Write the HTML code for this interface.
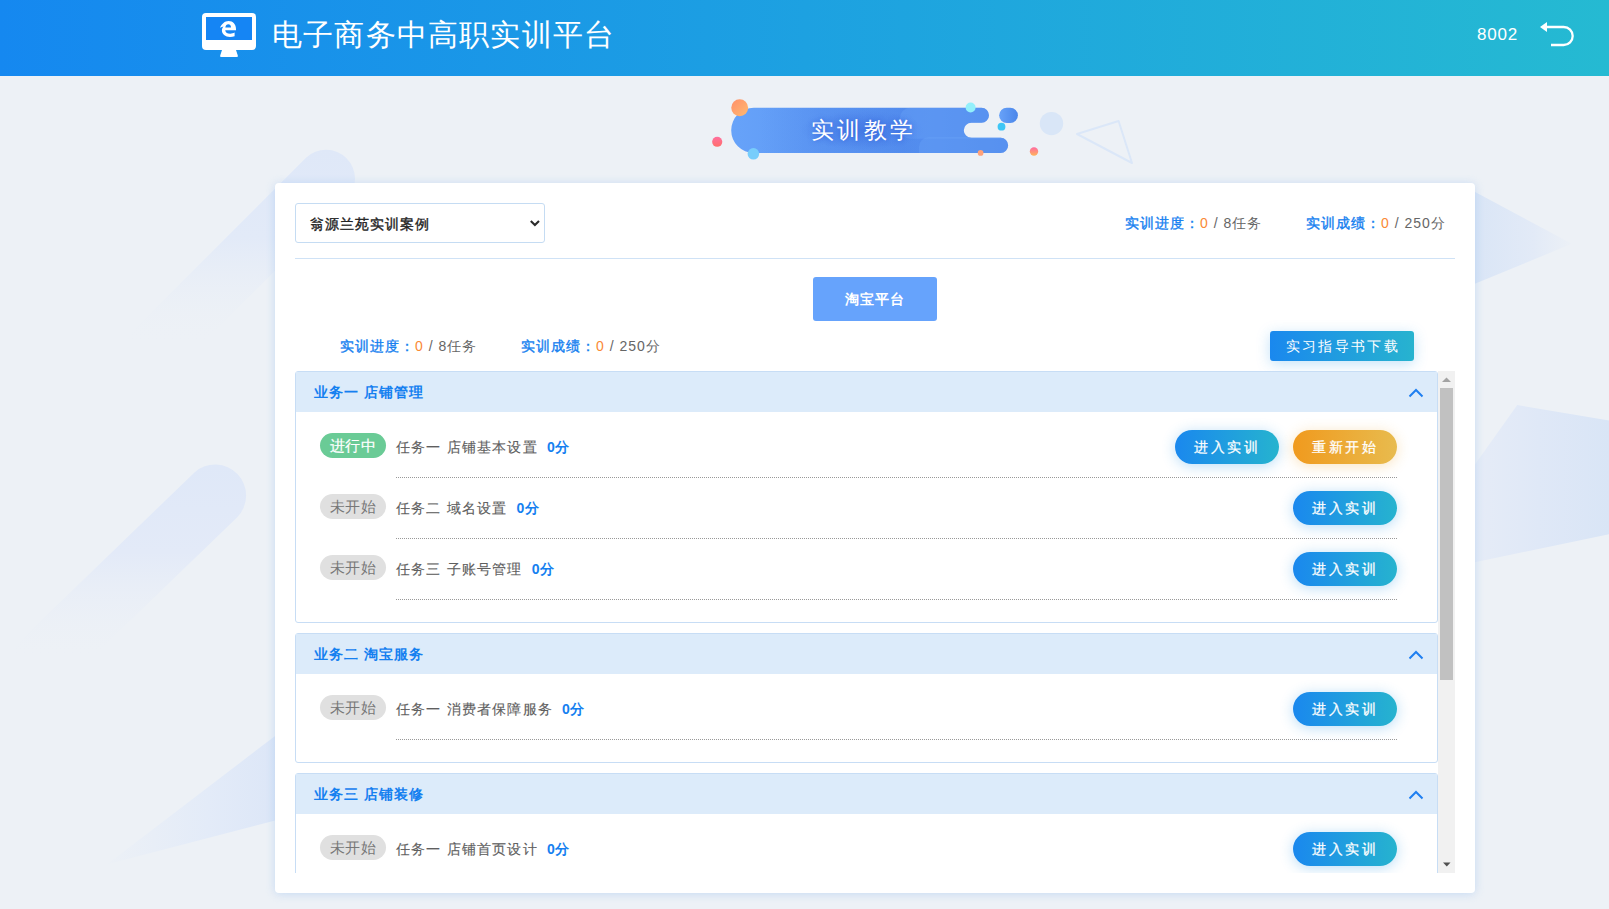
<!DOCTYPE html>
<html><head><meta charset="utf-8">
<style>
*{box-sizing:border-box;margin:0;padding:0}
html,body{width:1609px;height:909px;overflow:hidden}
body{background:#edf1f6;font-family:"Liberation Sans",sans-serif;position:relative;color:#666;letter-spacing:1px}
.abs{position:absolute}
#hdr{left:0;top:0;width:1609px;height:76px;background:linear-gradient(90deg,#1588f0 0%,#25bad2 100%)}
#title{left:272px;top:15px;font-size:30px;letter-spacing:1.2px;color:#fff;white-space:nowrap;line-height:40px}
#uid{left:1477px;top:23px;font-size:17px;letter-spacing:0.8px;color:#fff;line-height:24px}
.bg{position:absolute}
#card{left:275px;top:183px;width:1200px;height:710px;background:#fff;border-radius:4px;box-shadow:0 1px 10px rgba(150,190,240,.45)}
#sel{left:295px;top:203px;width:250px;height:40px;border:1px solid #c5dcf3;border-radius:3px;background:#fff}
#sel span{position:absolute;left:14px;top:10px;font-size:14px;font-weight:normal;-webkit-text-stroke:0.35px #222;color:#222;line-height:20px}
.stat{font-size:14px;line-height:20px;white-space:nowrap;color:#666}
.stat b{color:#1580f0;font-weight:normal;-webkit-text-stroke:0.35px #1580f0}
.stat i{font-style:normal;color:#fa8a35}
#div1{left:295px;top:258px;width:1160px;height:1px;background:#cfe2f6}
#tb{left:813px;top:277px;width:124px;height:44px;background:#66a3fc;border-radius:3px;color:#fff;font-weight:bold;font-size:14px;text-align:center;line-height:44px}
#guide{left:1270px;top:331px;width:144px;height:30px;border-radius:3px;background:linear-gradient(90deg,#1a88ee,#27b3cf);color:#fff;font-size:14px;text-align:center;line-height:30px;letter-spacing:2.35px;text-indent:1.5px;box-shadow:0 3px 14px rgba(40,150,230,.28)}
#scroll{left:295px;top:371px;width:1160px;height:502px;overflow:hidden}
.sec{position:absolute;left:0;width:1143px;border:1px solid #c7ddf5;border-radius:3px;background:#fff}
.sh{height:40px;background:#dcebfa;position:relative}
.sh span{position:absolute;left:18px;top:10px;font-size:14px;font-weight:bold;color:#1580f0;line-height:20px}
.sh svg{position:absolute;right:13.5px;top:16px}
.row{position:absolute;left:0;width:1141px;height:61px}
.badge{position:absolute;left:24px;width:66px;height:25px;border-radius:13px;font-size:15px;text-align:center;line-height:25px;letter-spacing:0.9px;text-indent:0.9px}
.g{background:#6acb96;color:#fff;-webkit-text-stroke:0.2px #fff}
.n{background:#e0e0e0;color:#777}
.tt{position:absolute;left:100px;font-size:14px;line-height:20px;color:#5f5f5f;white-space:nowrap;letter-spacing:1.2px;-webkit-text-stroke:0.15px #5f5f5f}
.tt b{color:#1580f0;-webkit-text-stroke:0;font-weight:600;margin-left:9px;letter-spacing:0.6px}
.dot{position:absolute;left:100px;width:1001px;height:0;border-top:1px dotted #999}
.btn{position:absolute;width:104px;height:34px;border-radius:17px;color:#fff;font-size:14px;text-align:center;line-height:34px;letter-spacing:2.4px;text-indent:0.5px;-webkit-text-stroke:0.25px #fff}
.bb{background:linear-gradient(90deg,#1a88ee,#26b3cf);box-shadow:0 2px 14px rgba(40,150,230,.32)}
.bo{background:linear-gradient(90deg,#f09a1e,#e8bb4e);box-shadow:0 2px 14px rgba(240,170,60,.32)}
#sb{left:1143px;top:0;width:17px;height:502px;background:#f1f1f1}
</style></head><body>
<div id="hdr" class="abs"></div>
<div id="title" class="abs">电子商务中高职实训平台</div>
<div id="uid" class="abs">8002</div>
<svg class="abs" style="left:200px;top:10px" width="60" height="50" viewBox="200 10 60 50">
<rect x="202" y="13" width="54" height="37" rx="4" fill="#fff"/>
<rect x="206" y="17" width="46" height="23" fill="#1585f4"/>
<path d="M221.5,57 L236.5,57 Q238.5,57 237.8,55.5 L236,50 L222,50 L220.2,55.5 Q219.5,57 221.5,57 Z" fill="#fff"/>
<g transform="translate(220,21)">
<path d="M0,6.8 C1.8,2.8 4.8,0 8.5,0 C13,0 16,3.5 16,8 L16,9.2 L5.2,9.2 C5.4,11.6 7.6,12.8 10.2,12.8 C11.8,12.8 13.3,12.3 14.6,11.6 L14.6,15.2 C13.2,15.8 11.6,16 10,16 C5.2,16 1.9,13.2 1.9,9.6 C1.9,8 2.6,6.6 3.6,5.6 C2.4,5.9 1.2,6.3 0,6.8 Z" fill="#fff"/>
<path d="M5.3,6.6 C5.5,4.3 6.8,3.2 8.3,3.2 C9.9,3.2 11,4.4 11,6.6 Z" fill="#1585f4"/>
</g></svg>
<svg class="abs" style="left:1536px;top:18px" width="42" height="32" viewBox="0 0 42 32">
<polygon points="4,9 11,4 11,14" fill="#fff"/>
<path d="M10,9 L27.7,9 A9,9 0 0 1 27.7,27 L15,27" fill="none" stroke="#fff" stroke-width="2.3"/>
</svg>
<svg class="abs" style="left:700px;top:90px" width="450" height="85" viewBox="0 0 450 85">
<defs>
<linearGradient id="bg1" x1="0" y1="0" x2="1" y2="0"><stop offset="0" stop-color="#6aa6fb"/><stop offset="0.5" stop-color="#5a95f2"/><stop offset="1" stop-color="#4a84ea"/></linearGradient>
<linearGradient id="bg2" x1="0" y1="0" x2="1" y2="0"><stop offset="0" stop-color="#68a2f8"/><stop offset="1" stop-color="#4a86ea"/></linearGradient>
<linearGradient id="og" x1="0" y1="0" x2="1" y2="1"><stop offset="0" stop-color="#ff8f6a"/><stop offset="1" stop-color="#ffba70"/></linearGradient>
<linearGradient id="pg" x1="0" y1="0" x2="0" y2="1"><stop offset="0" stop-color="#ff6aa0"/><stop offset="1" stop-color="#ffb45a"/></linearGradient>
<linearGradient id="rg" x1="0" y1="0" x2="0" y2="1"><stop offset="0" stop-color="#ff6f9f"/><stop offset="1" stop-color="#ff6f6a"/></linearGradient>
<linearGradient id="dk" x1="0" y1="0" x2="1" y2="0"><stop offset="0" stop-color="#3f72e0" stop-opacity="0"/><stop offset="0.35" stop-color="#3f72e0" stop-opacity="0.16"/><stop offset="0.85" stop-color="#3f72e0" stop-opacity="0.16"/><stop offset="1" stop-color="#3f72e0" stop-opacity="0"/></linearGradient>
<radialGradient id="tg" cx="0.5" cy="0.5" r="0.5"><stop offset="0" stop-color="#3d70e0" stop-opacity="0.55"/><stop offset="1" stop-color="#3d70e0" stop-opacity="0"/></radialGradient>
</defs>
<clipPath id="mc"><path d="M53.8,17.7 L281.5,17.7 A7.5,7.5 0 0 1 281.5,32.7 L271.3,32.7 A7.55,7.55 0 0 0 271.3,47.8 L300.6,47.8 A7.55,7.55 0 0 1 300.6,62.9 L53.8,62.9 A22.6,22.6 0 0 1 53.8,17.7 Z"/></clipPath>
<g clip-path="url(#mc)">
<rect x="0" y="0" width="320" height="85" fill="url(#bg1)"/>
<rect x="60" y="17.7" width="170" height="45" fill="url(#dk)"/>
<rect x="200" y="17.7" width="130" height="31" rx="10" fill="#6aa2f7" opacity="0.4"/>
<rect x="219" y="47" width="130" height="30" rx="10" fill="#6aa2f7" opacity="0.4"/>
</g>
<ellipse cx="162" cy="40" rx="62" ry="20" fill="url(#tg)"/>
<rect x="299.1" y="17.7" width="18.8" height="15.3" rx="7.65" fill="url(#bg2)"/>
<circle cx="39.7" cy="17.7" r="8.45" fill="url(#og)"/>
<circle cx="17.2" cy="51.8" r="5.07" fill="url(#rg)"/>
<circle cx="53.4" cy="63.8" r="5.8" fill="#78cdfb"/>
<circle cx="270.6" cy="17.5" r="5" fill="#93f0fb"/>
<circle cx="301.5" cy="36.7" r="3.9" fill="#3ec6f6"/>
<circle cx="280.6" cy="62.9" r="2.85" fill="#ffa27a"/>
<circle cx="334" cy="61.5" r="4.2" fill="url(#pg)"/>
<circle cx="351.5" cy="33.6" r="11.7" fill="#d9e6f7"/>
<polygon points="377,44 418.6,31 432,73" fill="none" stroke="#dbe7f8" stroke-width="2" stroke-linejoin="round"/>
</svg>
<div class="abs" style="left:811px;top:115px;font-size:23px;line-height:30px;color:#fff;letter-spacing:3.4px;white-space:nowrap;text-shadow:0 0 5px rgba(30,70,210,.55)">实训教学</div>

<svg class="bg" style="left:0;top:0" width="1609" height="909" viewBox="0 0 1609 909">
<defs>
<linearGradient id="g1" gradientUnits="userSpaceOnUse" x1="0" y1="150" x2="0" y2="345"><stop offset="0" stop-color="#dfe8f8"/><stop offset="0.45" stop-color="#e2eaf8"/><stop offset="1" stop-color="#edf1f6" stop-opacity="0"/></linearGradient>
<linearGradient id="g2" gradientUnits="userSpaceOnUse" x1="0" y1="465" x2="0" y2="660"><stop offset="0" stop-color="#dfe8f8"/><stop offset="0.45" stop-color="#e3eaf8"/><stop offset="1" stop-color="#edf1f6" stop-opacity="0"/></linearGradient>
</defs>
<path d="M306.0,157.8 A29.0,29.0 0 0 1 347.0,198.8 L120.7,425.1 L79.7,384.1 Z" fill="url(#g1)"/>
<path d="M194.5,472.4 A31.0,31.0 0 0 1 237.5,517.0 L7.3,739.3 L-35.7,694.7 Z" fill="url(#g2)"/>
</svg>
<div class="bg" style="left:100px;top:725px;width:180px;height:145px;clip-path:polygon(100% 5%,100% 65%,4% 96%);background:linear-gradient(90deg,rgba(237,241,246,0) 0%,#e3ebf8 60%,#dce6f7 100%)"></div>
<div class="bg" style="left:1470px;top:185px;width:105px;height:105px;clip-path:polygon(0 4%,97% 56%,0 96%);background:linear-gradient(90deg,#d9e5f6 0%,#e2eaf7 60%,rgba(237,241,246,0) 100%)"></div>
<div class="bg" style="left:1470px;top:400px;width:139px;height:170px;clip-path:polygon(34% 3%,100% 12%,100% 79%,0 96%,0 42%);background:linear-gradient(90deg,#e6ecf7 0%,#dfe8f7 50%,#d9e5f6 100%)"></div>
<div id="card" class="abs"></div>
<div id="sel" class="abs"><span>翁源兰苑实训案例</span><svg class="abs" style="left:233px;top:14px" width="12" height="10"><polyline points="1.8,2.9 5.9,7 10,2.9" fill="none" stroke="#2b2b2b" stroke-width="2.1"/></svg></div>
<div class="abs stat" style="left:1125px;top:213px"><b>实训进度：</b><i>0</i> / 8任务</div>
<div class="abs stat" style="left:1306px;top:213px"><b>实训成绩：</b><i>0</i> / 250分</div>
<div id="div1" class="abs"></div>
<div id="tb" class="abs">淘宝平台</div>
<div class="abs stat" style="left:340px;top:336px"><b>实训进度：</b><i>0</i> / 8任务</div>
<div class="abs stat" style="left:521px;top:336px"><b>实训成绩：</b><i>0</i> / 250分</div>
<div id="guide" class="abs">实习指导书下载</div>

<div id="scroll" class="abs">
<div class="sec" style="top:0;height:252px"><div class="sh"><span>业务一 店铺管理</span><svg width="16" height="10" viewBox="0 0 16 10"><polyline points="1.5,8.5 8,2 14.5,8.5" fill="none" stroke="#1f7ff0" stroke-width="2"/></svg></div><div class="badge g" style="top:61px">进行中</div><div class="tt" style="top:65px">任务一 店铺基本设置<b>0分</b></div><div class="btn bb" style="left:879px;top:58px">进入实训</div><div class="btn bo" style="left:997px;top:58px">重新开始</div><div class="dot" style="top:105px"></div><div class="badge n" style="top:122px">未开始</div><div class="tt" style="top:126px">任务二 域名设置<b>0分</b></div><div class="btn bb" style="left:997px;top:119px">进入实训</div><div class="dot" style="top:166px"></div><div class="badge n" style="top:183px">未开始</div><div class="tt" style="top:187px">任务三 子账号管理<b>0分</b></div><div class="btn bb" style="left:997px;top:180px">进入实训</div><div class="dot" style="top:227px"></div></div><div class="sec" style="top:262px;height:130px"><div class="sh"><span>业务二 淘宝服务</span><svg width="16" height="10" viewBox="0 0 16 10"><polyline points="1.5,8.5 8,2 14.5,8.5" fill="none" stroke="#1f7ff0" stroke-width="2"/></svg></div><div class="badge n" style="top:61px">未开始</div><div class="tt" style="top:65px">任务一 消费者保障服务<b>0分</b></div><div class="btn bb" style="left:997px;top:58px">进入实训</div><div class="dot" style="top:105px"></div></div><div class="sec" style="top:402px;height:200px"><div class="sh"><span>业务三 店铺装修</span><svg width="16" height="10" viewBox="0 0 16 10"><polyline points="1.5,8.5 8,2 14.5,8.5" fill="none" stroke="#1f7ff0" stroke-width="2"/></svg></div><div class="badge n" style="top:61px">未开始</div><div class="tt" style="top:65px">任务一 店铺首页设计<b>0分</b></div><div class="btn bb" style="left:997px;top:58px">进入实训</div><div class="dot" style="top:105px"></div></div><div id="sb" class="abs"><div class="abs" style="left:2px;top:17px;width:13px;height:292px;background:#c1c1c1"></div><svg class="abs" style="left:4px;top:6px" width="9" height="6"><polygon points="0,5 4.5,0.5 9,5" fill="#a3a3a3"/></svg><svg class="abs" style="left:4.5px;top:490.5px" width="9" height="6"><polygon points="0,0.5 7.5,0.5 3.75,4.6" fill="#505050"/></svg></div>
</div>
</body></html>
